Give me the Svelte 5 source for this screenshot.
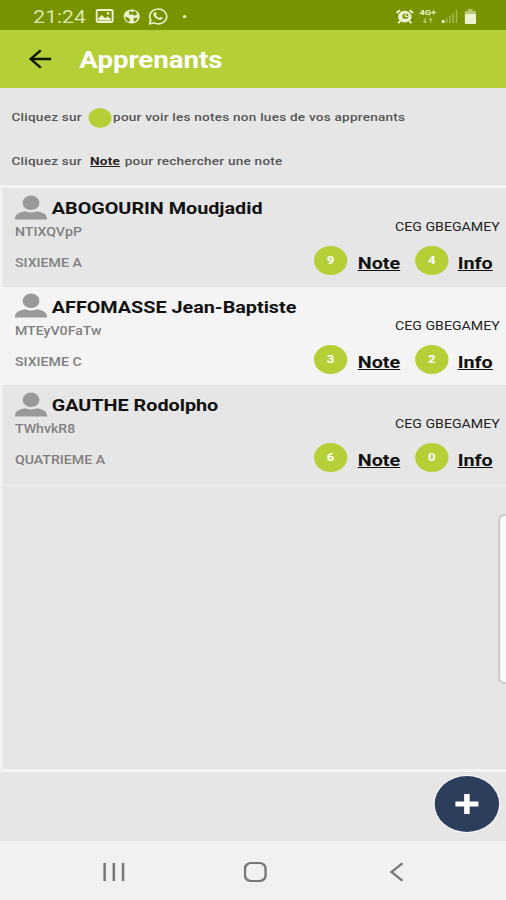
<script lang="ts">
	interface Learner {
		name: string;
		code: string;
		level: string;
		school: string;
		notes: number;
		infos: number;
	}

	const learners: Learner[] = [
		{ name: "ABOGOURIN Moudjadid", code: "NTIXQVpP", level: "SIXIEME A", school: "CEG GBEGAMEY", notes: 9, infos: 4 },
		{ name: "AFFOMASSE Jean-Baptiste", code: "MTEyV0FaTw", level: "SIXIEME C", school: "CEG GBEGAMEY", notes: 3, infos: 2 },
		{ name: "GAUTHE Rodolpho", code: "TWhvkR8", level: "QUATRIEME A", school: "CEG GBEGAMEY", notes: 6, infos: 0 },
	];
</script>

<main class="screen">
	<div class="status">
		<span class="clock">21:24</span>
		<svg class="picture" width="16" height="14" viewBox="0 0 16 14">
			<rect x="1" y="1" width="14" height="12" rx="1.5" fill="none" stroke="currentColor" stroke-width="1.8" />
			<path d="M2.5 11.5V9l3-3 3 3.2 2-2 3 3v1.3z" fill="currentColor" />
			<circle cx="11" cy="4.5" r="1.2" fill="currentColor" />
		</svg>
		<svg class="globe" width="15" height="15" viewBox="0 0 15 15">
			<circle cx="7.5" cy="7.5" r="7" fill="currentColor" />
			<path d="M5.3 1.7 7.6 3 10.6 2 12.5 5.3 10 6.8 8 5.2 5.5 6zM1.5 7.5 4.7 8.8 6.3 11 5 13 2.5 11zM9 9.2l3.8-.7-1.3 3.3-2 .9z" fill="#779300" />
		</svg>
		<svg class="whatsapp" width="17" height="17" viewBox="0 0 17 17">
			<path d="M1 16l1.1-4A7.4 7.4 0 1 1 5 14.9z" fill="none" stroke="currentColor" stroke-width="1.5" />
			<path d="M5.300 4.500c.6-.6 1.200-.4 1.500.3l.5 1.200-.8 1.200c.7 1.300 1.500 2.100 2.800 2.700l1.100-1 1.800.9c.4.2.4.7-.1 1.300-1 1.200-2.600.9-4.400-.2C5.500 9.500 4 7.400 4.400 5.700z" fill="currentColor" />
		</svg>
		<i class="dot"></i>
		<div class="signals">
			<svg width="16" height="15" viewBox="0 0 16 15">
				<circle cx="8" cy="7.7" r="5.9" fill="currentColor" />
				<path d="M.8 4 3.8 1.200M15.200 4l-3-2.800M4 12l-1.800 2.200M12 12l1.800 2.200" stroke="currentColor" stroke-width="1.8" />
				<circle cx="8.5" cy="7.2" r="2.600" fill="#779300" />
				<path d="M8.500 5v2.500h2.200" fill="none" stroke="currentColor" stroke-width="1.2" />
			</svg>
			<span class="network">
				<b>4G+</b>
				<svg width="10" height="5" viewBox="0 0 10 5">
					<path d="M2.500 0v4.500M1 3l1.500 1.700L4 3M7.500 5V.5M6 2 7.500.4 9 2" fill="none" stroke="currentColor" opacity=".6" />
				</svg>
			</span>
			<svg width="14" height="14" viewBox="0 0 14 14">
				<path d="M0 11h2.500v3H0z" fill="currentColor" />
				<path d="M4.500 9v5M7.300 6.500V14M10 4v10M13 1v13" stroke="currentColor" opacity=".4" stroke-width="1.3" />
			</svg>
			<svg class="battery" width="10" height="15" viewBox="0 0 10 15">
				<path d="M3 0h4v2h3v3H0V2h3z" fill="currentColor" opacity=".55" />
				<path d="M0 5h10v9a1 1 0 0 1-1 1H1a1 1 0 0 1-1-1z" fill="currentColor" />
			</svg>
		</div>
	</div>

	<header>
		<svg width="20" height="20" viewBox="0 0 20 20">
			<path d="M19.5 10H1.7M10.5 1.2 1.7 10l8.800 8.800" fill="none" stroke="#101500" stroke-width="2.3" />
		</svg>
		<h1>Apprenants</h1>
	</header>

	<section class="help">
		<p>Cliquez sur <i class="bullet"></i>pour voir les notes non lues de vos apprenants</p>
		<p>Cliquez sur <b>Note</b>pour rechercher une note</p>
	</section>

	<section class="list">
		{#each learners as learner}
			<article>
				<div class="who">
					<div class="name">
						<svg width="28" height="25" viewBox="0 0 28 25">
							<circle cx="14" cy="7.8" r="7.3" fill="#999" />
							<path d="M0 24.500C0 19 3.500 17.500 9 16.200q5 2.600 10 0c5.500 1.300 9 2.800 9 8.300z" fill="#999" />
						</svg>
						<h2>{learner.name}</h2>
					</div>
					<span class="code">{learner.code}</span>
					<span class="level">{learner.level}</span>
				</div>
				<div class="side">
					<span class="school">{learner.school}</span>
					<div class="links">
						<span class="badge">{learner.notes}</span>
						<span class="link note">Note</span>
						<span class="badge">{learner.infos}</span>
						<span class="link">Info</span>
					</div>
				</div>
			</article>
		{/each}
		<div class="edge"></div>
	</section>

	<footer>
		<div class="fab">
			<svg width="22" height="22" viewBox="0 0 22 22">
				<path d="M11 1v20M1 11h20" stroke="#fff" stroke-width="4.8" />
			</svg>
		</div>
	</footer>

	<nav>
		<svg width="20" height="20" viewBox="0 0 20 20">
			<path d="M2 1v18M10 1v18M18 1v18" stroke="#777" stroke-width="2.2" />
		</svg>
		<svg width="20" height="20" viewBox="0 0 20 20">
			<rect x="1" y="1" width="18" height="18" rx="5.5" fill="none" stroke="#777" stroke-width="2.2" />
		</svg>
		<svg width="20" height="20" viewBox="0 0 20 20">
			<path d="M15 1.200 5.500 10l9.500 8.800" fill="none" stroke="#777" stroke-width="2.2" />
		</svg>
	</nav>

	<div class="handle"></div>
</main>

<style>
	:global(body) {
		margin: 0;
		overflow: hidden;
		background: #e6e6e6;
	}
	/* Laid out at 440px wide, then widened to fill the display. */
	.screen {
		position: relative;
		width: 440px;
		height: 900px;
		display: flex;
		flex-direction: column;
		overflow: hidden;
		transform: scaleX(1.15);
		transform-origin: 0 0;
		font-family: Roboto, "Liberation Sans", sans-serif;
		background: #e6e6e6;
	}
	svg {
		display: block;
		flex: none;
	}
	h1,
	h2,
	p {
		margin: 0;
	}
	.status {
		height: 30px;
		box-sizing: border-box;
		padding: 2px 26px 0 29px;
		display: flex;
		align-items: center;
		color: #edf3cf;
		background: #779300;
	}
	.clock {
		width: 54px;
		font-size: 18.3px;
		color: #dce6ac;
	}
	.globe {
		margin-left: 8px;
	}
	.whatsapp {
		margin-left: 7px;
	}
	.dot {
		width: 3px;
		height: 3px;
		margin-left: 13px;
		border-radius: 50%;
		background: currentColor;
	}
	.signals {
		margin-left: auto;
		display: flex;
		align-items: center;
	}
	.network {
		width: 16px;
		margin: 0 4px 0 4px;
		display: flex;
		flex-direction: column;
		align-items: center;
		gap: 2px;
		font-size: 8px;
		line-height: 7px;
	}
	.battery {
		margin-left: 6px;
	}
	header {
		height: 58px;
		display: flex;
		align-items: center;
		padding-left: 25px;
		gap: 24px;
		background: #b5cf37;
	}
	h1 {
		font-size: 24px;
		font-weight: 700;
		line-height: 28px;
		color: #fff;
		padding-top: 2px;
	}
	.help {
		height: 97px;
		box-sizing: border-box;
		padding: 7px 0 0 10px;
		color: #555;
	}
	.help p {
		height: 44px;
		display: flex;
		align-items: center;
		font-size: 11.8px;
		font-weight: 500;
		letter-spacing: 0.2px;
		white-space: pre;
	}
	.bullet {
		width: 20px;
		height: 20px;
		margin: 2px 1px 0 3px;
		border-radius: 50%;
		background: #b5cf37;
	}
	.help b {
		margin: 0 4px;
		color: #222;
		text-decoration: underline;
	}
	.list {
		flex: 1;
		border: solid #f4f4f4;
		border-width: 3px 0 3px 2px;
	}
	article {
		height: 98.5px;
		box-sizing: border-box;
		display: flex;
		justify-content: space-between;
		padding: 6px 5.5px 0 11px;
	}
	article:nth-child(even) {
		background: #f4f4f4;
	}
	.who {
		display: flex;
		flex-direction: column;
	}
	.name {
		display: flex;
		align-items: center;
		gap: 4px;
		height: 26px;
	}
	h2 {
		font-size: 17.2px;
		font-weight: 700;
		color: #111;
		white-space: nowrap;
		padding-top: 2px;
	}
	.code,
	.level {
		font-size: 12.3px;
		line-height: 16px;
		font-weight: 500;
		color: #808080;
	}
	.code {
		margin-top: 4px;
	}
	.level {
		margin-top: 15px;
	}
	.side {
		display: flex;
		flex-direction: column;
		align-items: flex-end;
	}
	.school {
		margin-top: 25px;
		font-size: 12.3px;
		line-height: 16px;
		color: #222;
	}
	.links {
		display: flex;
		align-items: center;
		margin: 11px 6px 0 0;
	}
	.badge {
		width: 29px;
		height: 29px;
		border-radius: 50%;
		font-size: 11.5px;
		font-weight: 700;
		line-height: 29px;
		text-align: center;
		color: #fff;
		background: #b5cf37;
	}
	.link {
		margin-left: 8px;
		padding-top: 5px;
		font-size: 17.2px;
		line-height: 22px;
		font-weight: 700;
		color: #111;
		text-decoration: underline;
	}
	.note {
		margin: 0 13px 0 9px;
	}
	.edge {
		height: 3px;
		background: #ececec;
	}
	footer {
		height: 69px;
		box-sizing: border-box;
		display: flex;
		justify-content: flex-end;
		padding: 4px 6px 0 0;
	}
	.fab {
		width: 56px;
		height: 56px;
		border-radius: 50%;
		display: grid;
		place-items: center;
		background: #2d3e5c;
		box-shadow: 0 0 0 1px #f6f6f6;
	}
	nav {
		height: 59px;
		display: flex;
		align-items: center;
		padding: 3px 0 0 89px;
		box-sizing: border-box;
		gap: 103px;
		background: #f1f1f1;
	}
	/* Edge panel handle, floating above the list. */
	.handle {
		position: absolute;
		top: 514px;
		right: -6px;
		width: 9px;
		height: 166px;
		border: 2px solid #cdcdcd;
		border-radius: 6px;
		background: #fafafa;
	}
</style>
